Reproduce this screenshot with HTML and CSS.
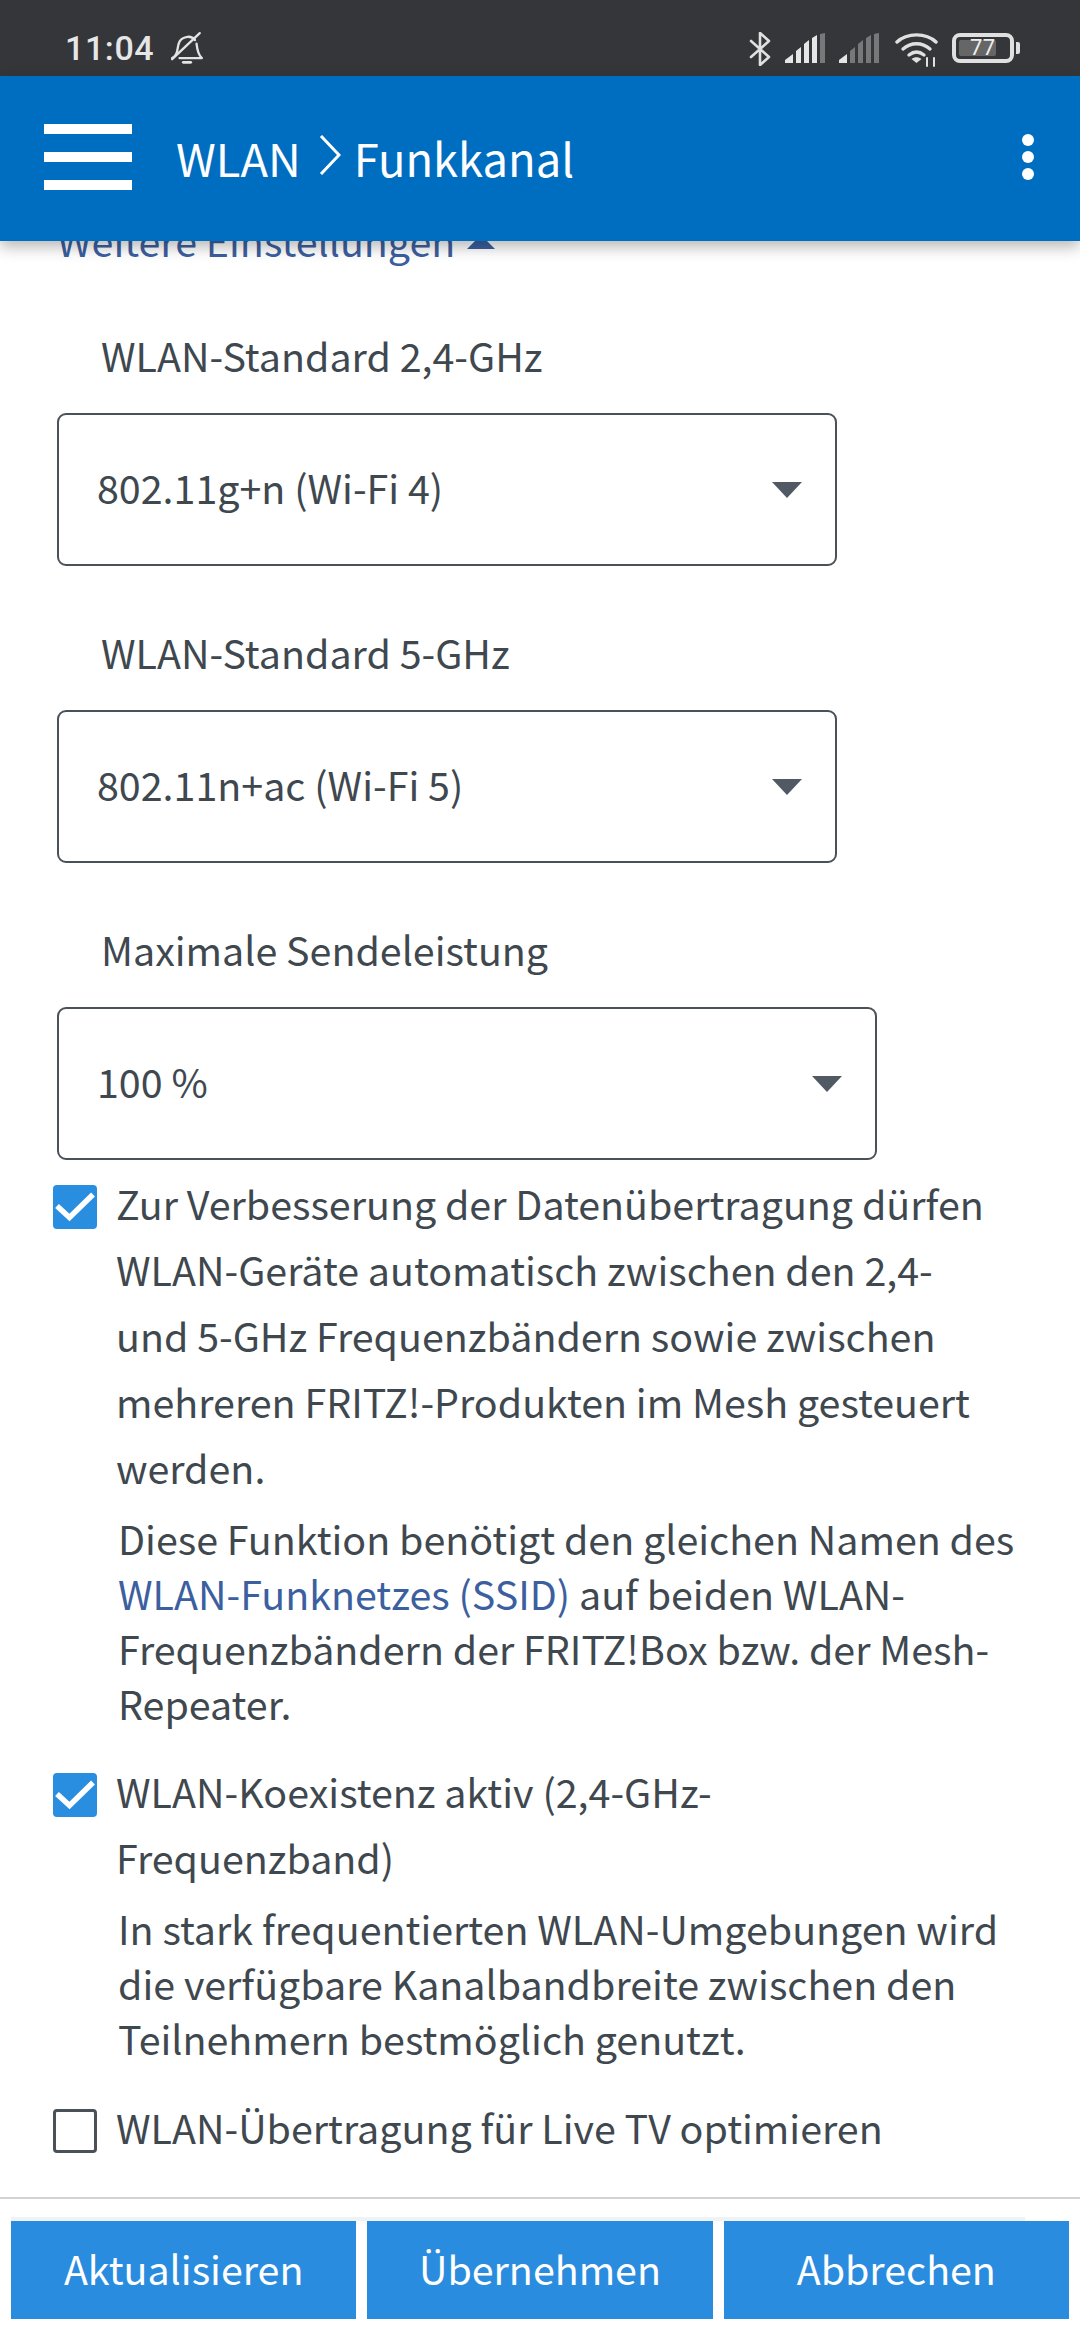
FILE: index.html
```html
<!DOCTYPE html>
<html lang="de">
<head>
<meta charset="utf-8">
<title>WLAN Funkkanal</title>
<link rel="stylesheet" href="styles.css">
</head>
<body>
<div class="screen">
  <div class="statusbar">
    <div class="status-left">
      <span class="time">11:04</span>
      <svg class="bell" width="34" height="34" viewBox="0 0 32 32" fill="none" stroke="#e4e4e4" stroke-width="2.2" stroke-linecap="round" stroke-linejoin="round"><path d="M2 25.500c3-1.500 4.500-4 5-8 .6-5 1.500-11 9.500-12 3-.3 5.500 1 7 3"/><path d="M25 12c.6 6 1.500 10.500 5 13.500H9"/><path d="M2 26.500 28 2"/><path d="M12.500 29.500h7" stroke-width="2.600"/></svg>
    </div>
    <div class="status-right">
      <svg class="bt" width="22" height="34" viewBox="0 0 22 34" fill="none" stroke="#e0e0e0" stroke-width="2.600" stroke-linejoin="round" stroke-linecap="round"><path d="M2 9l18 16-9 8V1l9 8L2 25"/></svg>
      <svg class="sig" width="40" height="30" viewBox="0 0 40 30"><path fill="#e6e6e6" d="M0 30v-3l8-6v9zM11 30V18l5-4v16zM19 30V11l5-4v23zM27 30V5l5-3v28z"/><path fill="#77787a" d="M35 30V1l5-1v30z"/></svg>
      <svg class="sig" width="40" height="30" viewBox="0 0 40 30"><path fill="#e6e6e6" d="M0 30v-3l8-6v9z"/><path fill="#77787a" d="M11 30V18l5-4v16zM19 30V11l5-4v23zM27 30V5l5-3v28zM35 30V1l5-1v30z"/></svg>
      <svg class="wifi" width="44" height="34" viewBox="0 0 44 34" fill="none" stroke="#e0e0e0" stroke-width="3.400" stroke-linecap="round"><path d="M2 9C12-.5 31-.5 41 9"/><path d="M8 16c8-7 19-7 27 0"/><path d="M14 22c5-4 10-4 15 0"/><path d="M21.500 30l-5-4c3-2.500 7-2.500 10 0z" fill="#e0e0e0" stroke="none"/><path d="M32 25v8M39 25v8" stroke-width="2"/></svg>
      <div class="battery"><div class="cell"><div class="level"></div><span class="pct">77</span></div><div class="nub"></div></div>
    </div>
  </div>

  <header class="appbar">
    <div class="burger"><span></span><span></span><span></span></div>
    <div class="crumbs">
      <span>WLAN</span>
      <svg class="chev" width="22" height="40" viewBox="0 0 22 40" fill="none" stroke="#fff" stroke-width="3"><path d="M2 1l18 19L2 39"/></svg>
      <span>Funkkanal</span>
    </div>
    <div class="kebab"><span></span><span></span><span></span></div>
  </header>

  <main class="content">
    <a class="more">Weitere Einstellungen <i class="up"></i></a>

    <div class="field">
      <div class="field-label">WLAN-Standard 2,4-GHz</div>
      <div class="select"><span>802.11g+n (Wi-Fi 4)</span><i class="down"></i></div>
    </div>
    <div class="field">
      <div class="field-label">WLAN-Standard 5-GHz</div>
      <div class="select"><span>802.11n+ac (Wi-Fi 5)</span><i class="down"></i></div>
    </div>
    <div class="field wide">
      <div class="field-label">Maximale Sendeleistung</div>
      <div class="select"><span>100 %</span><i class="down"></i></div>
    </div>

    <div class="option first">
      <div class="box on"><svg width="44" height="44" viewBox="0 0 44 44" fill="none" stroke="#fff" stroke-width="5.500"><path d="M4 21l12.500 11.500L40 9.500"/></svg></div>
      <div class="option-body">
        <div class="option-text">Zur Verbesserung der Datenübertragung dürfen<br>WLAN-Geräte automatisch zwischen den 2,4-<br>und 5-GHz Frequenzbändern sowie zwischen<br>mehreren FRITZ!-Produkten im Mesh gesteuert<br>werden.</div>
        <p class="hint">Diese Funktion benötigt den gleichen Namen des<br><a class="link">WLAN-Funknetzes (SSID)</a> auf beiden WLAN-<br>Frequenzbändern der FRITZ!Box bzw. der Mesh-<br>Repeater.</p>
      </div>
    </div>
    <div class="option second">
      <div class="box on"><svg width="44" height="44" viewBox="0 0 44 44" fill="none" stroke="#fff" stroke-width="5.500"><path d="M4 21l12.500 11.500L40 9.500"/></svg></div>
      <div class="option-body">
        <div class="option-text">WLAN-Koexistenz aktiv (2,4-GHz-<br>Frequenzband)</div>
        <p class="hint">In stark frequentierten WLAN-Umgebungen wird<br>die verfügbare Kanalbandbreite zwischen den<br>Teilnehmern bestmöglich genutzt.</p>
      </div>
    </div>
    <div class="option third">
      <div class="box"></div>
      <div class="option-body">
        <div class="option-text">WLAN-Übertragung für Live TV optimieren</div>
      </div>
    </div>
  </main>

  <footer class="actions">
    <div class="action-rule"></div>
    <div class="buttons">
      <button class="btn">Aktualisieren</button>
      <button class="btn">Übernehmen</button>
      <button class="btn">Abbrechen</button>
    </div>
  </footer>
</div>
</body>
</html>
```

FILE: styles.css
```css
* { box-sizing: border-box; }
html, body { margin: 0; padding: 0; background: #fff; }
body { font-family: "Noto Sans CJK SC", "Noto Sans", sans-serif; color: #40484f; }
.screen { width: 1080px; height: 2340px; display: flex; flex-direction: column; overflow: hidden; }

.statusbar { height: 76px; flex: none; background: #35363a; display: flex; justify-content: space-between; align-items: flex-start; padding: 0 60px 0 65px; }
.status-left { display: flex; align-items: center; gap: 16px; height: 64px; padding-top: 32px; }
.time { font: 500 34px/1 Roboto, sans-serif; color: #e6e6e6; letter-spacing: .6px; }
.bell { flex: none; }
.status-right { display: flex; align-items: flex-start; padding-top: 32px; }
.bt { margin-right: 14px; }
.sig { margin-right: 14px; margin-top: 1px; }
.wifi { margin: 1px 13px 0 2px; }
.battery { display: flex; align-items: center; gap: 2px; height: 30px; margin-top: 1px; }
.cell { position: relative; width: 62px; height: 30px; border: 4px solid #e0e0e0; border-radius: 8px; }
.level { width: 37px; height: 16px; margin: 3px 0 0 3px; background: #666; border-radius: 2px; }
.pct { position: absolute; left: 14px; top: -2px; font: 400 22px/26px Roboto, sans-serif; color: #eee; letter-spacing: .5px; }
.nub { width: 4px; height: 12px; background: #e0e0e0; border-radius: 0 2px 2px 0; }

.appbar { position: relative; z-index: 2; flex: none; height: 165px; background: #006ec0; color: #fff; display: flex; align-items: center; padding: 0 48px 0 44px; box-shadow: 0 6px 14px rgba(0,0,0,.28); }
.burger { width: 88px; height: 66px; display: flex; flex-direction: column; justify-content: space-between; margin-top: -4px; }
.burger span { display: block; height: 10px; background: #fff; }
.crumbs { flex: 1; display: flex; align-items: center; gap: 13px; margin-left: 44px; font-size: 45.300px; font-weight: 400; line-height: 60px; margin-top: -4px; }
.chev { margin: -4px 0 0 5px; }
.kebab { display: flex; flex-direction: column; gap: 5px; margin-top: -3px; margin-right: -2px; }
.kebab span { width: 12px; height: 12px; border-radius: 50%; background: #fff; }

.content { flex: 1; min-height: 0; overflow: hidden; padding-left: 57px; }
.more { display: block; margin: -28px 0 0 0; font-size: 39.400px; line-height: 54px; font-weight: 400; color: #3c5fa0; }
.up { display: inline-block; width: 0; height: 0; border: 14px solid transparent; border-top: 0; border-bottom: 14px solid #3c5fa0; vertical-align: 8px; margin-left: 3px; }

.field { width: 780px; margin-top: 61px; }
.more + .field { margin-top: 63px; }
.field.wide { width: 820px; }
.field-label { padding-left: 44px; font-size: 39.400px; line-height: 55px; font-weight: 400; margin-bottom: 28px; position: relative; top: -3px; }
.select { height: 153px; border: 2px solid #4a5158; border-radius: 9px; display: flex; align-items: center; justify-content: space-between; padding: 0 33px 0 38px; font-size: 39.400px; font-weight: 400; }
.select span { margin-top: -6px; }
.down { width: 0; height: 0; border: 15px solid transparent; border-bottom: 0; border-top: 16px solid #515a64; }

.option { display: flex; gap: 19px; margin-left: -4px; }
.option.first { margin-top: 25px; }
.option.second { margin-top: 43px; }
.option.third { margin-top: 44px; }
.box { flex: none; width: 44px; height: 44px; border: 3px solid #4a5158; border-radius: 4px; }
.box.on { background: #2a8ee0; border: 0; }
.box svg { display: block; }
.option-text { font-size: 39.400px; line-height: 66px; font-weight: 400; margin-top: -15px; }
.hint { margin: 10px 0 0 2px; font-size: 39.400px; line-height: 55px; font-weight: 400; }
.link { color: #3c5fa0; }

.actions { flex: none; height: 143px; border-top: 2px solid #d3d3d3; padding-top: 18px; }
.action-rule { height: 4px; margin-left: 11px; width: 1014px; background: #f0f3f6; }
.buttons { display: flex; gap: 11px; padding: 0 11px; }
.btn { flex: 1; height: 98px; border: 0; padding: 0 0 6px; background: #2a8cdf; color: #fff; font-family: inherit; font-size: 39.400px; font-weight: 400; }
```
